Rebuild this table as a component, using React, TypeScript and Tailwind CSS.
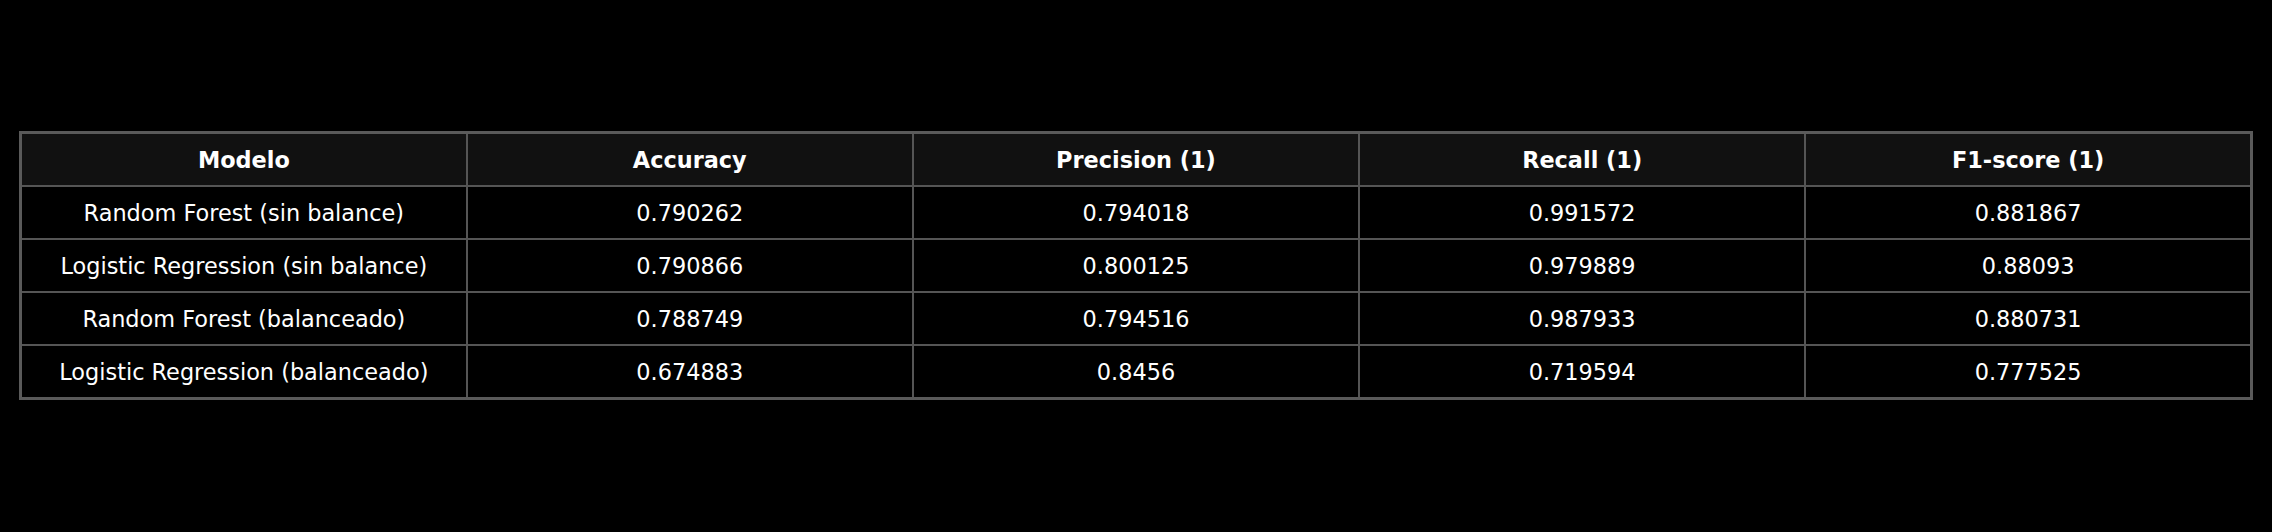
import React from "react";

const headers = ["Modelo", "Accuracy", "Precision (1)", "Recall (1)", "F1-score (1)"];
const rows = [
  ["Random Forest (sin balance)", "0.790262", "0.794018", "0.991572", "0.881867"],
  ["Logistic Regression (sin balance)", "0.790866", "0.800125", "0.979889", "0.88093"],
  ["Random Forest (balanceado)", "0.788749", "0.794516", "0.987933", "0.880731"],
  ["Logistic Regression (balanceado)", "0.674883", "0.8456", "0.719594", "0.777525"],
];

export default function App() {
  return (
    <div
      className="w-[2272px] h-[532px] bg-black px-[19px] pt-[131px]"
      style={{ fontFamily: '"DejaVu Sans", sans-serif' }}
    >
      <table className="w-full table-fixed border-collapse border-[3px] border-[#5a5a5a] text-[22.4px] text-white">
        <thead>
          <tr className="h-[53px] bg-[#111111]">
            {headers.map((h) => (
              <th key={h} className="border-[2.5px] border-[#555555] text-center font-bold p-0 pt-[3px]">
                {h}
              </th>
            ))}
          </tr>
        </thead>
        <tbody>
          {rows.map((r, i) => (
            <tr key={i} className="h-[53.2px] bg-black">
              {r.map((c, j) => (
                <td key={j} className="border-[2.5px] border-[#555555] text-center p-0 pt-[3px] font-normal">
                  {c}
                </td>
              ))}
            </tr>
          ))}
        </tbody>
      </table>
    </div>
  );
}
